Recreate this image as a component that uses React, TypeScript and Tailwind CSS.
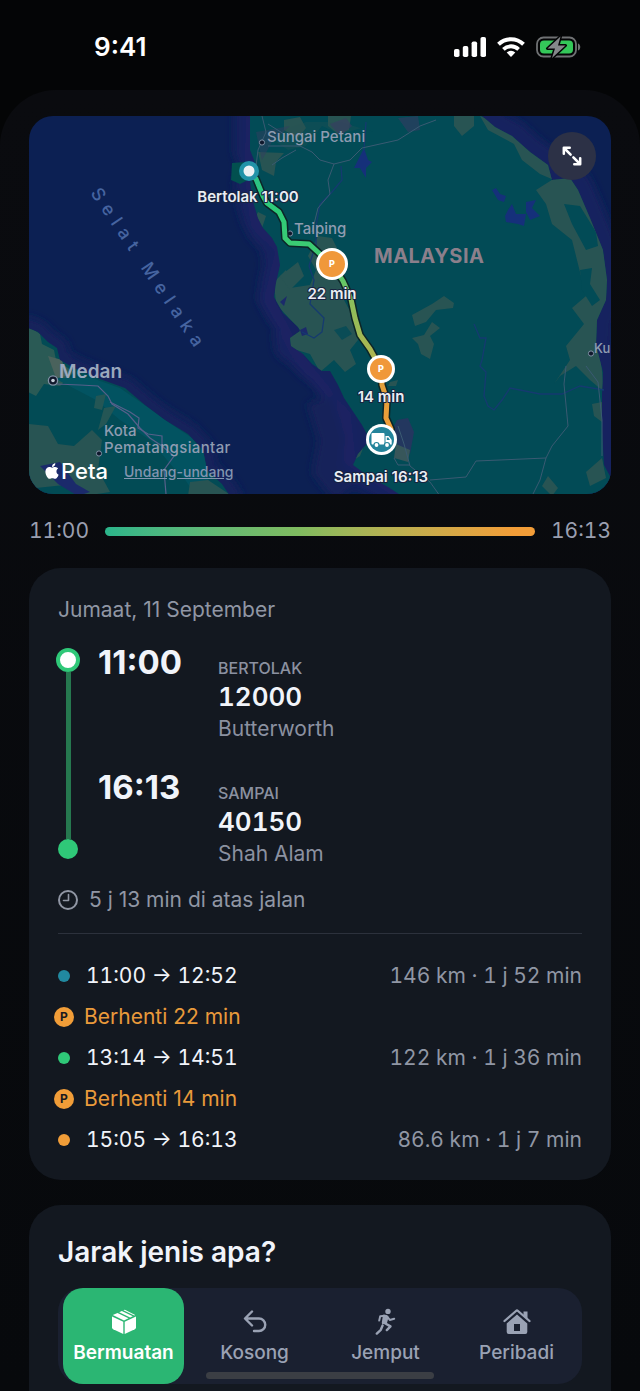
import { useState } from "react";
import type { ReactNode } from "react";
import { FaApple } from "react-icons/fa";

type Leg =
  | { kind: "drive"; from: string; to: string; info: string; dot: string }
  | { kind: "stop"; label: string };

const LEGS: Leg[] = [
  { kind: "drive", from: "11:00", to: "12:52", info: "146 km · 1 j 52 min", dot: "bg-[#2189a0]" },
  { kind: "stop", label: "Berhenti 22 min" },
  { kind: "drive", from: "13:14", to: "14:51", info: "122 km · 1 j 36 min", dot: "bg-[#2fc878]" },
  { kind: "stop", label: "Berhenti 14 min" },
  { kind: "drive", from: "15:05", to: "16:13", info: "86.6 km · 1 j 7 min", dot: "bg-[#f19d38]" },
];

const TRIP_TYPES = [
  { id: "loaded", label: "Bermuatan", icon: <BoxIcon /> },
  { id: "empty", label: "Kosong", icon: <ReturnIcon /> },
  { id: "pickup", label: "Jemput", icon: <RunnerIcon /> },
  { id: "private", label: "Peribadi", icon: <HouseIcon /> },
];

export default function App() {
  const [tripType, setTripType] = useState("loaded");

  return (
    <div className="flex min-h-screen flex-col bg-[#040506] font-['Inter','Liberation_Sans',sans-serif] text-[#f1f4fa]">
      <StatusBar />

      <main className="flex flex-1 flex-col rounded-t-[56px] bg-linear-to-b from-[#0a0b0f] to-[#07090c] px-[29px] pt-[26px]">
        <RouteMap />

        <div className="flex h-[74px] items-center gap-4 text-[21px] tabular-nums text-[#9a9fb0]">
          <span>11:00</span>
          <div className="h-[9px] flex-1 rounded-full bg-linear-to-r from-[#2ab58b] via-[#7fbb60] to-[#f29d38] from-0% via-45% to-95%" />
          <span>16:13</span>
        </div>

        <section aria-label="Perjalanan" className="rounded-[32px] bg-[#131820] px-[29px] pb-5 pt-7">
          <h2 className="text-[21px] leading-7 text-[#9096a4]">Jumaat, 11 September</h2>

          <div className="mt-6 flex gap-5">
            <div className="mb-[10px] flex w-5 flex-col items-center">
              <span className="size-6 shrink-0 rounded-full border-4 border-[#2fc878] bg-white" />
              <span className="w-[5px] flex-1 bg-[#26784f]" />
              <span className="size-5 shrink-0 rounded-full bg-[#2fc878]" />
            </div>
            <div className="flex flex-1 flex-col gap-[29px]">
              <Waypoint time="11:00" label="BERTOLAK" code="12000" place="Butterworth" />
              <Waypoint time="16:13" label="SAMPAI" code="40150" place="Shah Alam" />
            </div>
          </div>

          <p className="mt-[17px] flex items-center gap-[11px] text-[21px] leading-7 text-[#9096a4]">
            <ClockIcon />
            5 j 13 min di atas jalan
          </p>

          <div className="mb-[21px] mt-[19px] h-px bg-[#2c313c]" />

          <ul>
            {LEGS.map((leg, i) => (
              <LegRow key={i} leg={leg} />
            ))}
          </ul>
        </section>

        <section className="mt-[25px] flex-1 rounded-t-[32px] bg-[#131820] px-[29px] pb-[7px] pt-[29px]">
          <h2 className="text-[28px] font-semibold leading-9">Jarak jenis apa?</h2>
          <div className="mt-[18px] grid grid-cols-4 rounded-[24px] bg-[#1a2030]">
            {TRIP_TYPES.map((type) => (
              <button
                key={type.id}
                type="button"
                aria-pressed={tripType === type.id}
                onClick={() => setTripType(type.id)}
                className={`mx-[5px] flex h-24 flex-col items-center rounded-[20px] pt-5 text-[19px] leading-6 ${
                  tripType === type.id
                    ? "bg-[#2bb673] font-semibold text-white"
                    : "font-medium text-[#9aa2b4]"
                }`}
              >
                <span className="flex h-[33px] items-start justify-center">{type.icon}</span>
                {type.label}
              </button>
            ))}
          </div>
        </section>
      </main>

      <div className="fixed bottom-3 left-1/2 h-[7px] w-[228px] -translate-x-1/2 rounded-full bg-[#3b3e44]" />
    </div>
  );
}

function StatusBar() {
  return (
    <header className="flex h-[90px] items-center justify-between pb-[5px] pl-[94px] pr-[58px] pt-2">
      <time className="text-[26px] font-semibold leading-8 text-white">9:41</time>
      <div className="flex items-center gap-[11px]">
        <svg width="32" height="20" viewBox="0 0 32 20" fill="#fff">
          <rect x="0" y="12" width="5.500" height="8" rx="1.800" />
          <rect x="8.800" y="9" width="5.500" height="11" rx="1.800" />
          <rect x="17.600" y="4.500" width="5.500" height="15.500" rx="1.800" />
          <rect x="26.500" y="0" width="5.500" height="20" rx="1.800" />
        </svg>
        <svg width="28" height="20" viewBox="0 0 28 20" fill="none" stroke="#fff" strokeWidth="4">
          <path d="M1.500 7.200a18 18 0 0 1 25 0" />
          <path d="M6.400 12.300a11 11 0 0 1 15.200 0" strokeWidth="3.800" />
          <path d="M14 20l-4.300-4.400a6.200 6.200 0 0 1 8.600 0z" fill="#fff" stroke="none" />
        </svg>
        <svg width="46" height="22" viewBox="0 0 46 22">
          <rect x="1" y="1.500" width="39" height="19" rx="6.500" fill="none" stroke="#6f7173" strokeWidth="1.800" />
          <path d="M42 7.500c3 1 3 6 0 7z" fill="#6f7173" />
          <rect x="4" y="4.500" width="33" height="13" rx="4" fill="#34c759" />
          <path
            d="M24.500 0.500L11.500 12.500h7.500l-3 9.500L29.500 9.500H22z"
            fill="#85888a"
            stroke="#040506"
            strokeWidth="3"
            paintOrder="stroke"
            strokeLinejoin="round"
          />
        </svg>
      </div>
    </header>
  );
}

const PENINSULA =
  "M250 116L250 150L256 165L250 183L254 205L258 218L263 228L272 238L277 247L280 265L276 283L274 297L283 313L298 327L300 331L290 338L291 346L303 354L312 364L322 371L330 371L338 385L344 398L352 410L362 425L370 440L358 454L353 465L368 476L388 487L402 496L612 496L611 478L604 465L602 430L602 395L603 372L596 345L597 320L606 300L607 280L603 250L590 218L578 190L570 178L552 180L548 165L530 152L512 136L495 127L482 116Z";

const SUMATRA =
  "M28 328L38 332L48 342L57 348L60 360L74 368L100 379L125 388L145 405L165 420L188 434L203 450L207 470L222 484L230 496L28 496Z";

const ROUTE =
  "M249 171L256 179L263 196L267 203L279 212L284 222L285 238L290 243L309 244L320 254L332 264L343 281L351 299L355 318L360 335L370 349L381 369L382 385L387 400L386 418L391 429L383 440";

function RouteMap() {
  return (
    <section aria-label="Peta laluan" className="relative overflow-hidden rounded-[24px]">
      {/* the viewBox origin keeps the map coordinates in screen space */}
      <svg viewBox="29 116 582 378" className="block w-full">
        <defs>
          <linearGradient id="route" gradientUnits="userSpaceOnUse" x1="0" y1="171" x2="0" y2="440">
            <stop offset="0" stopColor="#2cc187" />
            <stop offset="0.150" stopColor="#2ecb78" />
            <stop offset="0.350" stopColor="#43cb70" />
            <stop offset="0.480" stopColor="#8ac05c" />
            <stop offset="0.720" stopColor="#b3b34e" />
            <stop offset="0.760" stopColor="#e0a03c" />
            <stop offset="1" stopColor="#f29d38" />
          </linearGradient>
          <clipPath id="land">
            <path d={PENINSULA} />
            <path d={SUMATRA} />
          </clipPath>
          <filter id="shallows" x="-10%" y="-10%" width="120%" height="120%">
            <feGaussianBlur stdDeviation="4" />
          </filter>
        </defs>

        <rect x="29" y="116" width="582" height="379" fill="#0c2053" />
        <g fill="none" strokeLinejoin="round" filter="url(#shallows)">
          <path d={PENINSULA} strokeWidth="32" stroke="#15225f" />
          <path d={SUMATRA} strokeWidth="22" stroke="#14235c" />
          <path d="M252 116L250 170L256 225L282 250L268 300L300 360L345 415L350 460L400 494" strokeWidth="12" stroke="#1a2264" />
          <path d="M320 400L332 440L326 470L345 494" strokeWidth="26" stroke="#12235a" />
        </g>

        <path d={PENINSULA} fill="#024b56" />
        <path d={SUMATRA} fill="#024b55" />
        <path d="M232 163L245 162L248 180L240 184L231 180Z" fill="#02504f" />

        <g clipPath="url(#land)">
          {/* sparse vegetation and farmland */}
          <g fill="#285453">
            <path d="M284 120L300 117L306 128L298 138L284 130Z" />
            <path d="M328 116H351L349 130L338 134L328 126Z" />
            <path d="M374 132L362 128L340 134L322 126L306 146L288 150L276 142L282 130L306 122L340 122Z" opacity="0.300" />
            <path d="M258 152L284 153L276 162L274 176L262 170Z" />
            <path d="M258 212L266 216L262 228L254 220Z" />
            <path d="M318 236L332 238L338 250L342 272L344 300L356 322L358 340L350 350L356 364L345 372L334 360L320 372L310 354L290 348L288 334L300 330L276 304L274 282L286 270L290 288L310 285L316 270L308 256Z" />
            <path d="M280 276L298 262L304 276L290 290Z" />
            <path d="M412 315L432 304L444 296L454 303L453 308L436 310L426 322L415 326Z" />
            <path d="M412 338L424 335L432 322L440 328L430 336L434 344L430 359L421 354L418 344Z" />
            <path d="M454 116L474 116L474 126L462 136L454 126Z" />
            <path d="M480 116L500 124L530 148L554 166L554 180L540 174L522 160L514 144L488 130Z" />
            <path d="M536 190L558 176L575 180L590 214L602 242L608 280L606 310L597 322L600 350L604 392L590 380L576 366L560 376L554 384L570 360L566 346L584 324L572 308L586 296L578 264L572 240L552 224L546 204Z" />
            <path d="M592 404L602 402L602 422L594 416Z" />
            <path d="M586 472L602 458L606 478L590 486Z" />
            <path d="M542 486L548 476L558 488L552 496Z" />
            <path d="M390 382L398 380L396 386L388 386Z" />
            <path d="M356 442L364 446L360 456L354 460Z" />
          </g>
          <path d="M564 204L580 206L596 232L598 246L586 250L572 224Z" fill="#024b56" />
          <path d="M580 270L592 268L590 284L600 300L592 306L582 290Z" fill="#024b56" />
          <path d="M334 330L346 326L352 334L342 340Z" fill="#0a4c56" />
          <path d="M280 302L287 296L284 306Z" fill="#1b2a6b" />
          <path d="M300 330L306 327L308 334L302 336Z" fill="#1b2a6b" />

          <path d="M397 420L408 418L414 432L410 454L398 446L392 430Z" fill="#23375f" />
          <path d="M396 444L410 450L408 462L394 458Z" fill="#37565a" />
          <path d="M256 132L290 126L272 142L262 160Z" fill="#313d60" opacity="0.500" />
          <path d="M330 124L346 118L352 126L340 136ZM398 118L418 116L420 130L408 132Z" fill="#3a3a64" opacity="0.550" />

          {/* Sumatra */}
          <path d="M28 326L40 334L42 344L54 350L56 360L74 372L60 386L44 384L36 396L28 392Z" fill="#2a5a55" />
          <path d="M48 356L62 360L66 376L56 378Z" fill="#4a625c" />
          <path d="M54 378L92 378L120 388L146 406L168 422L192 438L206 456L208 480L228 496L196 496L184 478L172 466L150 440L120 420L96 400Z" fill="#025361" />
          <path d="M96 396L106 394L102 410L94 408Z" fill="#245655" />
          <path d="M104 408L116 406L106 424L98 430Z" fill="#245655" />
          <path d="M28 424L48 426L58 444L74 446L92 430L102 440L98 470L110 492L84 496L74 484L36 488L28 476Z" fill="#285453" />
          <path d="M40 466L60 462L76 484L90 492L78 496L58 484Z" fill="#1b2a6b" />
          <path d="M190 482L208 480L232 496L188 496Z" fill="#285453" />
        </g>

        {/* lakes and rivers */}
        <g fill="#15307a">
          <path d="M360 156L364 148L368 160L372 162L366 168L366 178L360 168L354 168Z" />
          <path d="M492 190L496 188L500 194L506 196L504 202L498 200ZM505 216L508 210L512 204L516 214L526 214L524 226L518 224L506 222ZM526 202L536 200L532 208L540 216L530 220L526 212Z" />
        </g>
        <g fill="none" stroke="#153a70" strokeWidth="1.300">
          <path d="M474 324L480 338L486 338L482 360L480 366L486 372L484 396L488 406L494 410L502 400L510 388L540 394L562 394L580 386L604 390" />
          <path d="M341 166L342 180L332 192L320 204L316 226L316 250M366 122L364 150" />
          <path d="M314 250L309 266L314 280L310 304L324 318L322 332L314 338L302 332" />
        </g>
        <g fill="none" stroke="#3a5a72" strokeWidth="1">
          <path d="M262 116L266 132L258 150L256 166M268 124L284 134M268 146L300 146L312 152L320 160L334 164L350 160L362 148L398 140L420 126L436 120" />
          <path d="M334 164L328 180L330 194L318 208L312 232" />
          <path d="M272 165L282 158L296 150" />
          <path d="M566 366L564 384L568 426L552 446L546 458L540 480L532 496M546 458L500 460L476 461L466 477L430 480M586 366L598 382L602 420L602 456" />
          <path d="M398 426L404 444L410 466L430 482L440 496M394 458L398 465H410" />
        </g>
        <g fill="none" stroke="#56608a" strokeWidth="1.200">
          <path d="M56 384L80 385L98 386L108 396L112 404L128 414L140 428L150 438L162 446L174 456L164 470L166 494" />
          <path d="M110 402L130 412L139 418L138 428L148 434L162 436L162 452" />
        </g>

        {/* place names */}
        <g fill="#8f9cb1" className="text-[15px] font-medium">
          <text x="267" y="142">Sungai Petani</text>
          <text x="294" y="234">Taiping</text>
          <text x="594" y="353" className="text-[13px]">Ku</text>
          <text x="104" y="436">Kota</text>
          <text x="104" y="453" className="tracking-wide">Pematangsiantar</text>
        </g>
        <text x="59" y="378" fill="#9aa8bd" className="text-[19px] font-semibold">Medan</text>
        <text x="374" y="263" fill="#8c7f8b" className="text-[20px] font-bold tracking-wide">MALAYSIA</text>
        <text
          transform="translate(90 193) rotate(56)"
          fill="#4664a0"
          className="text-[18px] font-medium tracking-[7px]"
        >
          Selat Melaka
        </text>
        <g fill="#10182c" stroke="#8090a5" strokeWidth="1">
          <circle cx="262" cy="142.500" r="2.600" />
          <circle cx="290" cy="233.500" r="2.600" />
          <circle cx="591" cy="353.500" r="2.600" />
          <circle cx="99" cy="453.500" r="2.600" />
          <circle cx="53" cy="380.500" r="4.600" strokeWidth="1.300" />
          <circle cx="53" cy="380.500" r="1.800" fill="#c3ccd6" stroke="none" />
        </g>

        <g fill="none" strokeLinejoin="round" strokeLinecap="round">
          <path d={ROUTE} stroke="#0c2527" strokeWidth="8" />
          <path d={ROUTE} stroke="url(#route)" strokeWidth="5" />
        </g>

        <circle cx="249" cy="171" r="10" fill="#2292a8" />
        <circle cx="249" cy="171" r="5.500" fill="#eef1f4" />
        <ParkingPin x={332} y={264} r={16} />
        <ParkingPin x={381} y={369} r={14} />
        <TruckPin />

        <g
          fill="#e9edf3"
          stroke="#17233f"
          strokeWidth="2"
          strokeLinejoin="round"
          paintOrder="stroke"
          textAnchor="middle"
          className="text-[15px] font-semibold"
        >
          <text x="248" y="202">Bertolak 11:00</text>
          <text x="332" y="299">22 min</text>
          <text x="381" y="402">14 min</text>
          <text x="381" y="482">Sampai 16:13</text>
        </g>
      </svg>

      <button
        type="button"
        aria-label="Besarkan peta"
        className="absolute right-[15px] top-4 flex size-12 items-center justify-center rounded-full bg-[#2c3146]"
      >
        <svg width="20" height="20" viewBox="0 0 22 22" fill="none" stroke="#fff" strokeWidth="2.800" strokeLinecap="round" strokeLinejoin="round">
          <path d="M2 8.500V2h6.500M2.500 2.500l7 7" />
          <path d="M20 13.500V20h-6.500M19.500 19.500l-7-7" />
        </svg>
      </button>

      <div className="absolute bottom-[7px] left-[14px] flex items-center gap-4">
        <span className="flex items-center text-[22px] font-medium leading-8 text-white">
          <FaApple className="size-[18px]" />
          Peta
        </span>
        <a href="#legal" className="text-[14px] font-medium text-[#8295b0] underline">
          Undang-undang
        </a>
      </div>
    </section>
  );
}

function ParkingPin({ x, y, r }: { x: number; y: number; r: number }) {
  return (
    <g>
      <circle cx={x} cy={y} r={r} fill="#fff" />
      <circle cx={x} cy={y} r={r - 3} fill="#f0983a" />
      <text x={x} y={y + 3} textAnchor="middle" fill="#fff" className="text-[9px] font-extrabold">
        P
      </text>
    </g>
  );
}

function TruckPin() {
  return (
    <g>
      <circle cx="381.500" cy="439.500" r="15.500" fill="#fff" />
      <circle cx="381.500" cy="439.500" r="12.500" fill="#23839a" />
      <g fill="#fff">
        <rect x="371.500" y="433" width="13" height="11.500" rx="1" />
        <path d="M385.500 436h3.200l3 4v4.500h-6.200z" />
        <path d="M386.800 437.400h1.500l1.700 2.600h-3.200z" fill="#23839a" />
      </g>
      <g fill="#fff" stroke="#23839a" strokeWidth="1.200">
        <circle cx="376.500" cy="445" r="2.500" />
        <circle cx="387" cy="445" r="2.500" />
      </g>
    </g>
  );
}

function Waypoint({ time, label, code, place }: { time: string; label: string; code: string; place: string }) {
  return (
    <div className="flex gap-5">
      <time className="w-[100px] text-[33px] font-bold leading-7">{time}</time>
      <div className="pt-2">
        <div className="text-[16px] font-medium leading-6 text-[#8b91a0]">{label}</div>
        <div className="text-[26px] font-semibold leading-[34px] tabular-nums">{code}</div>
        <div className="text-[21px] leading-[30px] text-[#8b91a0]">{place}</div>
      </div>
    </div>
  );
}

function LegRow({ leg }: { leg: Leg }) {
  if (leg.kind === "stop") {
    return (
      <li className="flex h-[41px] items-center gap-[14px] text-[21px] text-[#e99a3b]">
        <span className="flex w-3 justify-center">
          <span className="flex size-5 shrink-0 items-center justify-center rounded-full bg-[#f19d38] text-[12px] font-bold text-[#1a1a20]">
            P
          </span>
        </span>
        {leg.label}
      </li>
    );
  }
  return (
    <li className="flex h-[41px] items-center gap-4 text-[21px] tabular-nums">
      <span className={`size-3 rounded-full ${leg.dot}`} />
      <span className="flex-1">
        {leg.from} → {leg.to}
      </span>
      <span className="text-[#9096a4]">{leg.info}</span>
    </li>
  );
}

function Icon({ w, h, children }: { w: number; h: number; children: ReactNode }) {
  return (
    <svg width={w} height={h} viewBox={`0 0 ${w} ${h}`} fill="currentColor" aria-hidden="true">
      {children}
    </svg>
  );
}

function ClockIcon() {
  return (
    <svg width="20" height="20" viewBox="0 0 20 20" fill="none" stroke="currentColor" strokeWidth="2" strokeLinecap="round" strokeLinejoin="round">
      <circle cx="10" cy="10" r="9" />
      <path d="M10.500 4.500v6H5.500" strokeWidth="1.600" />
    </svg>
  );
}

function BoxIcon() {
  return (
    <Icon w={26} h={27}>
      <path d="M1 8.500l11.300 5.200V26L2.200 21.300Q1 20.700 1 19.500z" />
      <path d="M25 8.500l-11.300 5.200V26l10.100-4.700Q25 20.700 25 19.500z" />
      <path d="M1.800 7.100L6.500 5l11 5.300L13 12.400z" />
      <path d="M8.200 4.200l2.600-1.200 11 5.300-2.700 1.300z" />
      <path d="M12.400 2.200L13 2q.7-.3 1.400 0l9.800 5-1 .6z" />
    </Icon>
  );
}

function ReturnIcon() {
  return (
    <Icon w={24} h={27}>
      <path
        d="M9 3.500L2 10.500l7 7M2.500 10.500H16a6.200 6.200 0 0 1 0 12.500h-5"
        fill="none"
        stroke="currentColor"
        strokeWidth="2.400"
        strokeLinecap="round"
        strokeLinejoin="round"
      />
    </Icon>
  );
}

function RunnerIcon() {
  return (
    <Icon w={21} h={27}>
      <circle cx="13" cy="3.400" r="2.700" />
      <path d="M8 6.800q4-.6 5 1.200.8 1.400-.2 4l-.8 3-4.700 1.600q-1-1-.3-3.400z" />
      <g fill="none" stroke="currentColor" strokeWidth="2" strokeLinecap="round" strokeLinejoin="round">
        <path d="M9.500 7.800L5.200 8.200 4.200 12.600" />
        <path d="M12.500 8.800l2.300 3.200 4.400-1.200" />
        <path d="M9.500 15l6 3.400-3.700 3.700" strokeWidth="2.400" />
        <path d="M7.600 17.500l-1.800 4.300-4 3.800" strokeWidth="2.400" />
      </g>
    </Icon>
  );
}

function HouseIcon() {
  return (
    <Icon w={28} h={27}>
      <path d="M20.500 3.500h4V11l-4-3.500z" />
      <path
        d="M1.500 13L13 3q1-.9 2 0L26.500 13"
        fill="none"
        stroke="currentColor"
        strokeWidth="2.300"
        strokeLinecap="round"
      />
      <path
        fillRule="evenodd"
        d="M14 6.500L24.300 15.500V24q0 2-2 2H5.700q-2 0-2-2v-8.500zM11 16v7h6v-7z"
      />
    </Icon>
  );
}
